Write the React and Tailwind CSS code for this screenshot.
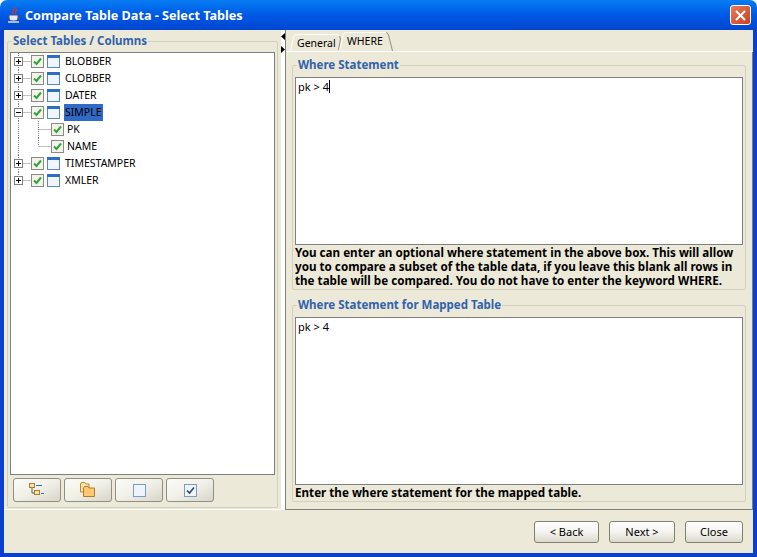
import React from "react";

const TABLES = [
  { name: "BLOBBER" },
  { name: "CLOBBER" },
  { name: "DATER" },
  { name: "SIMPLE", open: true, selected: true, columns: ["PK", "NAME"] },
  { name: "TIMESTAMPER" },
  { name: "XMLER" },
];

function Check({ className = "" }) {
  return (
    <span className={`w-[13px] h-[13px] shrink-0 border border-[#8a8a80] bg-[#f3f3ec] flex items-center justify-center ${className}`}>
      <svg width="9" height="9" viewBox="0 0 9 9">
        <path d="M1 4.5 L3.5 7 L8 1.5" fill="none" stroke="#2ea63a" strokeWidth="2" />
      </svg>
    </span>
  );
}

function TableIcon() {
  return (
    <svg width="13" height="13" viewBox="0 0 13 13" className="shrink-0">
      <rect x="0.5" y="0.5" width="12" height="12" fill="#eef5fb" stroke="#5f86b8" />
      <rect x="0" y="0" width="13" height="3" fill="#2f6fc0" />
    </svg>
  );
}

// dotted guide lines + plus/minus box in front of a table row
function Expander({ open, last }) {
  return (
    <svg width="20" height="17" viewBox="0 0 20 17" className="shrink-0">
      <path
        d={`M7.5 0 V${last ? 8 : 17} M7.5 8.5 H20`}
        stroke="#808080"
        strokeDasharray="1 1"
        fill="none"
      />
      <rect x="3.5" y="4.5" width="8" height="8" fill="#fff" stroke="#7f7f7f" />
      <path d={open ? "M5 8.5 H10" : "M5 8.5 H10 M7.5 6 V11"} stroke="#000" fill="none" />
    </svg>
  );
}

function ColumnGuide({ last }) {
  return (
    <svg width="40" height="17" viewBox="0 0 40 17" className="shrink-0">
      <path d="M7.5 0 V17" stroke="#808080" strokeDasharray="1 1" fill="none" />
      <path d={`M27.5 0 V${last ? 8 : 17} M27.5 8.5 H40`} stroke="#808080" strokeDasharray="1 1" fill="none" />
    </svg>
  );
}

function TreeRows() {
  return (
    <div className="text-[10.5px]">
      {TABLES.map((t, i) => (
        <React.Fragment key={t.name}>
          <div className="flex items-center h-[17px]">
            <Expander open={t.open} last={i === TABLES.length - 1} />
            <Check />
            <span className="w-[3px]" />
            <TableIcon />
            <span className={`ml-[4px] px-px h-[17px] leading-[17px] ${t.selected ? "bg-[#316ac5]" : ""}`}>{t.name}</span>
          </div>
          {t.columns &&
            t.columns.map((c, j) => (
              <div key={c} className="flex items-center h-[17px]">
                <ColumnGuide last={j === t.columns.length - 1} />
                <Check />
                <span className="ml-[3px] h-[17px] leading-[17px]">{c}</span>
              </div>
            ))}
        </React.Fragment>
      ))}
    </div>
  );
}

function Legend({ children }) {
  return (
    <legend className="ml-[2px] px-px h-[14px] leading-[14px] text-[11.5px] font-bold text-[#3163ab] whitespace-nowrap">
      {children}
    </legend>
  );
}

function ToolButton({ children }) {
  return (
    <button className="w-[48px] h-[24px] rounded-[3px] border border-[#8f8f84] bg-gradient-to-br from-[#fbfbf8] via-[#f1f0e8] to-[#d8d5c8] flex items-center justify-center">
      {children}
    </button>
  );
}

function NavButton({ width, children }) {
  return (
    <button className={`${width} h-[22px] rounded-[3px] border border-[#80806f] bg-gradient-to-b from-white via-[#f4f3ee] to-[#dcd8ce] text-[11px] text-black flex items-center justify-center`}>
      {children}
    </button>
  );
}

function TreeIcon() {
  return (
    <svg width="16" height="14" viewBox="0 0 16 14">
      <path d="M3 4 V10 H6" fill="none" stroke="#6b5a2c" />
      <rect x="0.5" y="0.5" width="5" height="4" fill="#ffdf9e" stroke="#a5803a" />
      <rect x="5.5" y="7.5" width="5" height="4" fill="#ffdf9e" stroke="#a5803a" />
      <path d="M7 2.5 H13 M12 10.5 H15" stroke="#2f6fc0" />
    </svg>
  );
}

function FoldersIcon() {
  return (
    <svg width="16" height="16" viewBox="0 0 16 16">
      <path d="M0.5 2 L1.5 0.5 H5 L6 2 H9 V10 H0.5 Z" fill="#fde3a7" stroke="#b98a3c" />
      <path d="M3.5 6 L4.5 4.5 H8 L9 6 H14.5 V14.5 H3.5 Z" fill="#fdc96f" stroke="#b07a2a" />
    </svg>
  );
}

function BoxIcon({ checked }) {
  return (
    <svg width="13" height="13" viewBox="0 0 13 13">
      <rect x="0.5" y="0.5" width="12" height="12" fill="#eef4fb" stroke="#7d9ac0" />
      {checked && <path d="M3 6.5 L5.5 9 L10 3.5" fill="none" stroke="#33476b" strokeWidth="1.6" />}
    </svg>
  );
}

function JavaIcon() {
  return (
    <svg width="16" height="18" viewBox="0 0 16 18">
      <path d="M8 1 C10 3 5 5 7 8 M10 3 C12 5 8 6 10 8" fill="none" stroke="#d8392b" strokeWidth="1.3" />
      <path d="M3 9 H12 V12 C12 14 10 15 7.5 15 C5 15 3 14 3 12 Z" fill="#e8e8f4" stroke="#4a4f8f" />
      <path d="M12 10 H14 V12 H12" fill="none" stroke="#4a4f8f" />
      <path d="M2 16 H13" stroke="#e8e8f4" strokeWidth="1.4" />
    </svg>
  );
}

function EditBox({ height, children }) {
  return (
    <div className={`${height} border border-[#7f7f7f] bg-white px-[2px] py-px text-[11px] leading-[16px]`}>
      {children}
    </div>
  );
}

// tab outlines are slanted, so they are drawn behind the label
function GeneralTab() {
  return (
    <div className="relative w-[52px] h-[20px] shrink-0">
      <svg width="52" height="20" viewBox="0 0 52 20" className="absolute inset-0">
        <path d="M0.5 20 L3.5 6 Q4.5 3.5 7 3.5 H46 Q48.5 3.5 49 5" fill="none" stroke="#fff" />
        <path d="M49.5 5 L50.5 8 L48.5 19" fill="none" stroke="#8f8d80" />
      </svg>
      <span className="absolute left-[7px] top-[4px] text-[10.5px] leading-[16px]">General</span>
    </div>
  );
}

function WhereTab() {
  return (
    <div className="relative w-[54px] h-[20px] shrink-0 -ml-[3px]">
      <svg width="54" height="20" viewBox="0 0 54 20" className="absolute inset-0">
        <path d="M0.5 20 L4.5 3 Q5.5 1.5 7.5 1.5 H47" fill="none" stroke="#fff" />
        <path d="M47 1.5 Q49 2 49.5 4 L53.5 20" fill="none" stroke="#8f8d80" />
      </svg>
      <span className="absolute left-[8px] top-[2px] text-[10.5px] leading-[16px]">WHERE</span>
    </div>
  );
}

export default function App() {
  return (
    <div className="w-[757px] h-[557px] flex flex-col overflow-hidden bg-white text-black text-[11px] font-['Noto_Sans','DejaVu_Sans',sans-serif]">
      <div className="h-[30px] shrink-0 rounded-t-[7px] flex items-center pl-[6px] pr-[6px] bg-gradient-to-b from-[#0a7cf2] via-[#0058e6] to-[#0246cf]">
        <JavaIcon />
        <span className="ml-[3px] text-[12.65px] font-bold text-white whitespace-nowrap">
          Compare Table Data - Select Tables
        </span>
        <span className="ml-auto w-[21px] h-[20px] rounded-[3px] border border-white bg-gradient-to-br from-[#e87a5a] to-[#c9401c] flex items-center justify-center">
          <svg width="11" height="11" viewBox="0 0 11 11">
            <path d="M1 1 L10 10 M10 1 L1 10" stroke="#fff" strokeWidth="2" />
          </svg>
        </span>
      </div>

      <div className="flex-1 min-h-0 flex flex-col border-x-4 border-b-4 border-[#0b3fd0] bg-[#ece9d8]">
        <div className="h-[480px] shrink-0 flex">
          {/* left pane */}
          <div className="w-[277px] shrink-0 px-[3px] pt-[4px] border-b border-white">
            <fieldset className="h-[474px] border border-[#d0d0bf] rounded-[2px] px-[2px] pb-[5px] flex flex-col">
              <Legend>Select Tables / Columns</Legend>
              <div className="mt-[4px] h-[423px] border border-[#7f7f7f] bg-white overflow-hidden">
                <TreeRows />
              </div>
              <div className="mt-[3px] flex gap-[3px] pl-[3px]">
                <ToolButton><TreeIcon /></ToolButton>
                <ToolButton><FoldersIcon /></ToolButton>
                <ToolButton><BoxIcon /></ToolButton>
                <ToolButton><BoxIcon checked /></ToolButton>
              </div>
            </fieldset>
          </div>

          {/* splitter */}
          <div className="w-[4px] shrink-0 bg-white flex flex-col pt-[3px]">
            <svg width="4" height="20" viewBox="0 0 4 20">
              <path d="M4 0 V7 L0 3.5 Z M0 13 V20 L4 16.5 Z" fill="#000" />
            </svg>
          </div>

          {/* right pane */}
          <div className="flex-1 min-w-0 flex flex-col border-l border-b border-[#808078]">
            <div className="h-[22px] shrink-0 flex items-end pl-[4px] border-b border-white">
              <GeneralTab />
              <WhereTab />
            </div>
            <div className="flex-1 min-h-0 flex flex-col gap-[8px] pl-[6px] pr-[6px] pt-[6px] border-r border-[#808078]">
              <fieldset className="h-[232px] border border-[#d0d0bf] rounded-[2px] px-[2px]">
                <Legend>Where Statement</Legend>
                <div className="mt-[5px]">
                  <EditBox height="h-[168px]">
                    pk &gt; 4<span className="inline-block w-px h-[13px] bg-black align-[-2px]" />
                  </EditBox>
                </div>
                <p className="mt-[1px] font-bold leading-[14px] text-[11.65px] whitespace-nowrap">
                  You can enter an optional where statement in the above box. This will allow
                  <br />
                  you to compare a subset of the table data, if you leave this blank all rows in
                  <br />
                  the table will be compared. You do not have to enter the keyword WHERE.
                </p>
              </fieldset>
              <fieldset className="h-[204px] border border-[#d0d0bf] rounded-[2px] px-[2px]">
                <Legend>Where Statement for Mapped Table</Legend>
                <div className="mt-[5px]">
                  <EditBox height="h-[168px]">pk &gt; 4</EditBox>
                </div>
                <p className="mt-[1px] font-bold leading-[14px] text-[11.65px] whitespace-nowrap">
                  Enter the where statement for the mapped table.
                </p>
              </fieldset>
            </div>
          </div>
        </div>

        {/* footer */}
        <div className="flex-1 flex items-start justify-end pt-[11px] pr-[10px]">
          <NavButton width="w-[65px]">&lt; Back</NavButton>
          <span className="w-[10px]" />
          <NavButton width="w-[66px]">Next &gt;</NavButton>
          <span className="w-[10px]" />
          <NavButton width="w-[58px]">Close</NavButton>
        </div>
      </div>
    </div>
  );
}
